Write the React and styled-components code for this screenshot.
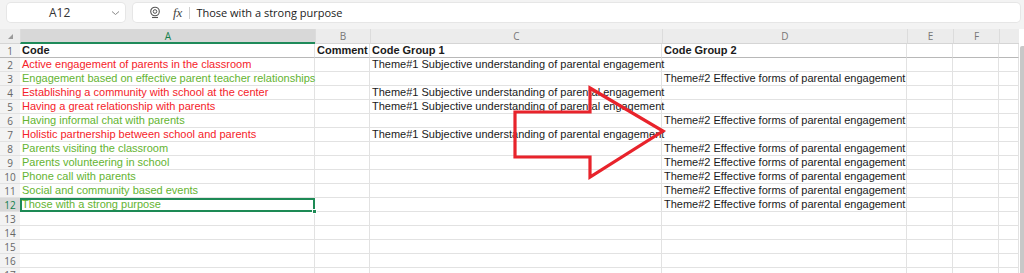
import React from 'react';
import styled, { createGlobalStyle } from 'styled-components';

const GlobalStyle = createGlobalStyle`
  html, body { margin: 0; padding: 0; background: #fff; }
  body { font-family: "Liberation Sans", Arial, sans-serif; }
`;

const RED = '#f5222a';
const GREEN = '#64b431';
const COLS = ['A', 'B', 'C', 'D', 'E', 'F', ''];
const T1 = 'Theme#1 Subjective understanding of parental engagement';
const T2 = 'Theme#2 Effective forms of parental engagement';

const rows = [
  { a: 'Code', c: 'Code Group 1', d: 'Code Group 2', b: 'Comment', head: true },
  { a: 'Active engagement of parents in the classroom', color: RED, c: T1 },
  { a: 'Engagement based on effective parent teacher relationships', color: GREEN, d: T2 },
  { a: 'Establishing a community with school at the center', color: RED, c: T1 },
  { a: 'Having a great relationship with parents', color: RED, c: T1 },
  { a: 'Having informal chat with parents', color: GREEN, d: T2 },
  { a: 'Holistic partnership between school and parents', color: RED, c: T1 },
  { a: 'Parents visiting the classroom', color: GREEN, d: T2 },
  { a: 'Parents volunteering in school', color: GREEN, d: T2 },
  { a: 'Phone call with parents', color: GREEN, d: T2 },
  { a: 'Social and community based events', color: GREEN, d: T2 },
  { a: 'Those with a strong purpose', color: GREEN, d: T2, selected: true },
  {}, {}, {}, {}, {},
];

export default function App() {
  return (
    <Page>
      <GlobalStyle />
      <TopBar>
        <NameBox>
          <span>A12</span>
          <svg width="9" height="6" viewBox="0 0 9 6">
            <path d="M1 1.5 L4.5 4.5 L8 1.5" fill="none" stroke="#8a8a8a" strokeWidth="1" />
          </svg>
        </NameBox>
        <FormulaBar>
          <svg width="13" height="13" viewBox="0 0 13 13">
            <circle cx="6" cy="5.5" r="4.3" fill="none" stroke="#555" strokeWidth="1.1" />
            <circle cx="6" cy="5.5" r="1.8" fill="none" stroke="#555" strokeWidth="1" />
            <path d="M3 11.5 H9" stroke="#555" strokeWidth="1.1" />
          </svg>
          <Fx>fx</Fx>
          <Divider />
          <FormulaText>Those with a strong purpose</FormulaText>
        </FormulaBar>
      </TopBar>

      <Sheet>
        <Grid>
          <Corner>
            <svg width="7" height="7" viewBox="0 0 7 7">
              <path d="M6 1 V6 H1 Z" fill="#9a9a9a" />
            </svg>
          </Corner>
          {COLS.map((c, i) => (
            <ColHead key={i} $active={c === 'A'}>{c}</ColHead>
          ))}

          {rows.map((r, i) => (
            <React.Fragment key={i}>
              <RowHead $active={r.selected} $frozen={i === 0}>{i + 1}</RowHead>
              <Cell $color={r.color} $bold={r.head} $selected={r.selected} $frozen={i === 0}>
                {r.a}
                {r.selected && <Handle />}
              </Cell>
              <Cell $bold={r.head} $frozen={i === 0}>{r.b}</Cell>
              <Cell $bold={r.head} $frozen={i === 0}>{r.c}</Cell>
              <Cell $bold={r.head} $frozen={i === 0}>{r.d}</Cell>
              <Cell $frozen={i === 0} />
              <Cell $frozen={i === 0} />
              <Cell $frozen={i === 0} />
            </React.Fragment>
          ))}
        </Grid>
        <Scrollbar>
          <Thumb />
        </Scrollbar>

        <Arrow width="1024" height="244" viewBox="0 29 1024 244">
          <polygon
            points="590,88 663,131 590,177 590,157 515,157 515,112 590,112"
            fill="none"
            stroke="#e8232b"
            strokeWidth="3.2"
            strokeLinejoin="miter"
          />
        </Arrow>
      </Sheet>
    </Page>
  );
}

const Page = styled.div`
  width: 1024px;
  height: 273px;
  overflow: hidden;
  background: #f3f3f3;
  display: flex;
  flex-direction: column;
`;

const TopBar = styled.div`
  flex-shrink: 0;
  height: 19px;
  padding: 3px 4px 7px 7px;
  display: flex;
  gap: 8px;
  align-items: stretch;
`;

const NameBox = styled.div`
  width: 118px;
  box-sizing: border-box;
  background: #fff;
  border-radius: 4px;
  box-shadow: 0 0 0 1px #e6e6e6;
  display: flex;
  align-items: center;
  justify-content: space-between;
  padding: 0 5px 0 42px;
  font-family: "Open Sans", "Noto Sans", sans-serif;
  font-size: 12px;
  color: #333;
`;

const FormulaBar = styled.div`
  flex: 1;
  background: #fff;
  border-radius: 4px;
  box-shadow: 0 0 0 1px #e6e6e6;
  display: flex;
  align-items: center;
  padding-left: 16px;
  font-family: "Open Sans", "Noto Sans", sans-serif;
  font-size: 11px;
  color: #222;
`;

const Fx = styled.span`
  font-family: "Liberation Serif", serif;
  font-style: italic;
  font-size: 13px;
  color: #444;
  margin-left: 11px;
`;

const Divider = styled.span`
  width: 1px;
  height: 12px;
  background: #d0d0d0;
  margin: 0 6px 0 7px;
`;

const FormulaText = styled.span`
  line-height: 1;
`;

const Sheet = styled.div`
  position: relative;
  flex: 1;
  display: flex;
  background: #fff;
`;

const Grid = styled.div`
  display: grid;
  grid-template-columns: 20px 295px 55px 292px 245px 46px 46px 20px;
  grid-template-rows: 15px;
  grid-auto-rows: 14px;
  font-size: 11px;
  background: #fff;
`;

const Corner = styled.div`
  background: #ececec;
  display: flex;
  align-items: flex-end;
  justify-content: center;
  padding-bottom: 3px;
  box-sizing: border-box;
  border-bottom: 1px solid #d5d5d5;
`;

const ColHead = styled.div`
  background: ${p => (p.$active ? '#d8d8d8' : '#ececec')};
  color: ${p => (p.$active ? '#137e4a' : '#777')};
  font-family: "Open Sans", "Noto Sans", sans-serif;
  font-size: 10px;
  display: flex;
  align-items: center;
  justify-content: center;
  box-sizing: border-box;
  border-left: 1px solid #dcdcdc;
  border-bottom: ${p => (p.$active ? '2px solid #1f8a5a' : '1px solid #d5d5d5')};
`;

const RowHead = styled.div`
  background: ${p => (p.$active ? '#d8d8d8' : '#f3f3f3')};
  color: ${p => (p.$active ? '#137e4a' : '#666')};
  font-family: "Open Sans", "Noto Sans", sans-serif;
  font-size: 10px;
  display: flex;
  align-items: center;
  justify-content: center;
  box-sizing: border-box;
  border-bottom: ${p => (p.$frozen ? '1px solid #b8b8b8' : '1px solid #e2e2e2')};
`;

const Cell = styled.div`
  position: relative;
  box-sizing: border-box;
  padding: 0 0 0 2px;
  white-space: nowrap;
  overflow: visible;
  line-height: 13px;
  color: ${p => p.$color || '#1a1a1a'};
  font-weight: ${p => (p.$bold ? 700 : 400)};
  border-right: 1px solid #e2e2e2;
  border-bottom: ${p => (p.$frozen ? '1px solid #b8b8b8' : '1px solid #e2e2e2')};
  ${p => p.$selected && `
    outline: 2px solid #1d8a55;
    outline-offset: -2px;
    z-index: 1;
  `}
`;

const Handle = styled.span`
  position: absolute;
  right: -3px;
  bottom: -3px;
  width: 5px;
  height: 5px;
  background: #1d8a55;
  border: 1px solid #fff;
  box-sizing: border-box;
`;

const Scrollbar = styled.div`
  flex: 1;
  background: #fff;
  display: flex;
  justify-content: flex-end;
  padding-top: 17px;
`;

const Thumb = styled.div`
  width: 4px;
  height: 240px;
  background: #c8c8c8;
  border-radius: 2px 0 0 2px;
`;

const Arrow = styled.svg`
  position: absolute;
  left: 0;
  top: 0;
  pointer-events: none;
  z-index: 2;
`;
